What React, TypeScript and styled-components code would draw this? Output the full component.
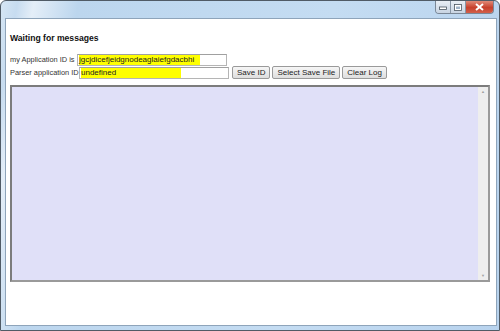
import React from 'react'
import styled, { createGlobalStyle } from 'styled-components';

const GlobalStyle = createGlobalStyle`
  * { box-sizing: border-box; }
  body {
    margin: 0;
    font-family: "Liberation Sans", Arial, sans-serif;
    background: #ffffff;
  }
`;

const App = () => {
  return (
    <>
      <GlobalStyle />
      <Window>
        <TitleBar>
          <CaptionGroup>
            <Caption>
              <svg width="8" height="5" viewBox="0 0 8 5"><rect x="0.5" y="2" width="7" height="2.5" fill="#fff" stroke="#4a5560" strokeWidth="0.8" /></svg>
            </Caption>
            <Caption>
              <svg width="8" height="7" viewBox="0 0 8 7"><rect x="0.5" y="0.5" width="7" height="6" fill="#fff" stroke="#4a5560" strokeWidth="0.8" /><rect x="2" y="2.5" width="4" height="2.5" fill="#9fb3c8" /></svg>
            </Caption>
            <CloseButton>
              <svg width="9" height="8" viewBox="0 0 9 8"><path d="M1 1 L8 7 M8 1 L1 7" stroke="#fff" strokeWidth="2" /></svg>
            </CloseButton>
          </CaptionGroup>
        </TitleBar>
        <Client>
          <Heading>Waiting for messages</Heading>
          <Row>
            <Label>my Application ID is</Label>
            <Field><Mark>jgcjdicefjeidgnodeaglaiefgdacbhi</Mark></Field>
          </Row>
          <Row>
            <Label $wide>Parser application ID</Label>
            <Field><Mark $pad>undefined</Mark></Field>
            <Button>Save ID</Button>
            <Button>Select Save File</Button>
            <Button>Clear Log</Button>
          </Row>
          <Log>
            <LogBody />
            <ScrollTrack>
              <Arrow>▲</Arrow>
              <Arrow>▼</Arrow>
            </ScrollTrack>
          </Log>
        </Client>
      </Window>
    </>
  )
}

export default App;

const Window = styled.div`
  width: 500px;
  height: 331px;
  border: 1px solid #505b66;
  border-radius: 6px 6px 0 0;
  background: linear-gradient(100deg, #d6e6f4 0%, #c7dcf0 3%, #e4eef8 6%, #bcd6ee 14%, #c4dcf2 60%, #b8d3ee 100%);
  display: flex;
  flex-direction: column;
  overflow: hidden;
`;
const TitleBar = styled.div`
  height: 17px;
  display: flex;
  justify-content: flex-end;
  align-items: flex-start;
  padding-right: 5px;
`;
const CaptionGroup = styled.div`
  display: flex;
  height: 13px;
  border: 1px solid #7a8796;
  border-top: none;
  border-radius: 0 0 4px 4px;
  overflow: hidden;
`;
const Caption = styled.div`
  width: 15px;
  display: flex;
  align-items: center;
  justify-content: center;
  background: linear-gradient(#e8eef5, #c8d4e2);
  border-right: 1px solid #8896a6;
`;
const CloseButton = styled.div`
  width: 27px;
  display: flex;
  align-items: center;
  justify-content: center;
  background: linear-gradient(#e08a78, #c7402c 55%, #d2604a);
`;
const Client = styled.div`
  flex: 1;
  margin: 0 2px 4px 4px;
  background: #ffffff;
  border: 1px solid #8ea4ba;
  padding: 13px 6px 0 4px;
  display: flex;
  flex-direction: column;
`;
const Heading = styled.div`
  font-size: 8.6px;
  font-weight: bold;
  color: #111;
  line-height: 12px;
  height: 12px;
  margin-bottom: 9px;
`;
const Row = styled.div`
  display: flex;
  align-items: center;
  height: 13px;
  gap: 2px;
`;
const Label = styled.span<{ $wide?: boolean }>`
  font-size: 7.4px;
  color: #333;
  white-space: nowrap;
  width: ${p => (p.$wide ? '67px' : '65px')};
`;
const Field = styled.div`
  width: 150px;
  height: 12px;
  border: 1px solid #b5b5b5;
  border-top-color: #a0a0a0;
  background: #fff;
  display: flex;
  align-items: center;
  padding-left: 1px;
  margin-right: 1px;
`;
const Mark = styled.span<{ $pad?: boolean }>`
  background: #ffff00;
  font-size: 8px;
  color: #222;
  line-height: 10px;
  padding-right: ${p => (p.$pad ? '65px' : '6px')};
`;
const Button = styled.button`
  height: 13px;
  padding: 0 4px;
  font-family: "Liberation Sans", Arial, sans-serif;
  font-size: 8px;
  color: #222;
  background: linear-gradient(#f6f6f6, #dedede);
  border: 1px solid #9a9a9a;
  border-radius: 2px;
  line-height: 10px;
`;
const Log = styled.div`
  margin-top: 6px;
  width: 480px;
  height: 197px;
  border: 2px solid #7c7c7c;
  border-right-color: #9a9a9a;
  border-bottom-color: #9a9a9a;
  background: #e0e0f8;
  display: flex;
`;
const LogBody = styled.div`
  flex: 1;
`;
const ScrollTrack = styled.div`
  width: 10px;
  background: #eeeeee;
  display: flex;
  flex-direction: column;
  justify-content: space-between;
  align-items: center;
  padding: 2px 0;
`;
const Arrow = styled.span`
  font-size: 4px;
  color: #a0a0a0;
  line-height: 5px;
`;
